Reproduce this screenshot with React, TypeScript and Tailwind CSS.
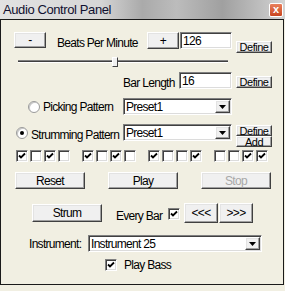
import React from 'react'

const raised =
  'flex items-center justify-center bg-[#f0f0f0] border border-t-white border-l-white border-r-[#404040] border-b-[#404040] shadow-[inset_-1px_-1px_0_#a0a0a0,inset_1px_1px_0_#e3e3e3]'
const sunken =
  'bg-white border border-t-[#808080] border-l-[#808080] border-r-white border-b-white shadow-[inset_1px_1px_0_#404040,inset_-1px_-1px_0_#dcdcdc]'

function Btn({ label, className = '', disabled = false }: { label: string; className?: string; disabled?: boolean }) {
  return (
    <div className={`${raised} ${className} ${disabled ? 'text-[#a8a8a8]' : 'text-black'}`}>
      <span className="leading-none">{label}</span>
    </div>
  )
}

// small "Define"/"Add" buttons use a tighter font
function SmallBtn({ label, className = '', underline = false }: { label: string; className?: string; underline?: boolean }) {
  return (
    <div className={`${raised} ${className} overflow-hidden`}>
      <span className={`text-[11px] leading-[10px] tracking-[-0.5px] ${underline ? 'underline' : ''}`}>{label}</span>
    </div>
  )
}

function Check({ on }: { on: boolean }) {
  return (
    <div className={`w-[12px] h-[12px] shrink-0 ${sunken} relative`}>
      {on && (
        <svg width="10" height="10" viewBox="0 0 10 10" className="absolute left-0 top-0">
          <polyline points="2,4.5 4,6.5 8,2.5" fill="none" stroke="#000" strokeWidth="1.8" />
        </svg>
      )}
    </div>
  )
}

function Radio({ on }: { on: boolean }) {
  return (
    <div className="w-[12px] h-[12px] shrink-0 rounded-full bg-white border border-[#9a9a9a] shadow-[inset_1px_1px_0_#c8c8c8] flex items-center justify-center">
      {on && <div className="w-[4px] h-[4px] rounded-full bg-black" />}
    </div>
  )
}

function Select({ value, className = '' }: { value: string; className?: string }) {
  return (
    <div className={`${sunken} ${className} flex items-center pl-[2px] pr-[1px]`}>
      <span className="flex-1 leading-none">{value}</span>
      <div className={`${raised} w-[15px] h-[13px]`}>
        <svg width="7" height="4" viewBox="0 0 7 4">
          <polygon points="0,0 7,0 3.5,4" fill="#000" />
        </svg>
      </div>
    </div>
  )
}

const pattern = [
  [true, false, true, false],
  [true, false, true, false],
  [true, false, false, true],
  [false, false, true, true],
]

export default function App() {
  return (
    <div className="w-[285px] h-[291px] bg-[#f1efe2] overflow-hidden text-[12px] tracking-[-0.7px] text-black font-['Liberation_Sans',Arial,sans-serif]">
      <div className="h-[19px] flex items-center pl-[3px] bg-[linear-gradient(to_right,#e2e2e2_0%,#d6d6d6_35%,#aaaaaa_50%,#bcbcbc_62%,#a0a0a0_78%,#c0c0c0_92%,#d4d4d4_100%)]">
        <span className="text-[13px] tracking-[-0.4px] text-[#101030]">Audio Control Panel</span>
        <div className="ml-auto mr-[2px] w-[14px] h-[14px] rounded-[2px] border border-white bg-[linear-gradient(#e9805c,#c9451f)] flex items-center justify-center">
          <span className="text-white text-[11px] font-bold leading-none tracking-normal">x</span>
        </div>
      </div>

      <div className="w-[284px] h-[266px] border border-[#1a1a1a] flex flex-col">
        <div className="flex items-start mt-[12px] h-[17px]">
          <Btn label="-" className="ml-[13px] w-[32px] h-[16px]" />
          <span className="ml-[11px] w-[90px] mt-[2px]">Beats Per Minute</span>
          <Btn label="+" className="w-[32px] h-[17px]" />
          <div className={`${sunken} ml-[1px] w-[52px] h-[17px] pl-[2px] flex items-center`}>126</div>
          <SmallBtn label="Define" underline className="ml-[4px] mt-[9px] w-[36px] h-[12px]" />
        </div>

        <div className="relative ml-[17px] mt-[8px] w-[210px] h-[10px]">
          <div className="absolute left-0 right-0 top-[3px] h-[1px] bg-[#808080]" />
          <div className="absolute left-0 right-0 top-[4px] h-[1px] bg-[#404040]" />
          <div className="absolute left-0 right-0 top-[5px] h-[1px] bg-white" />
          <div className="absolute left-[94px] top-0 w-[6px] h-[10px] bg-[#f0f0f0] border border-t-white border-l-white border-r-[#404040] border-b-[#404040]" />
        </div>

        <div className="flex items-start mt-[5px] h-[17px]">
          <span className="ml-[122px] w-[56px] mt-[2px]">Bar Length</span>
          <div className={`${sunken} w-[53px] h-[17px] pl-[2px] flex items-center`}>16</div>
          <SmallBtn label="Define" underline className="ml-[4px] mt-[4px] w-[36px] h-[12px]" />
        </div>

        <div className="flex items-center mt-[9px] h-[17px]">
          <div className="ml-[27px]">
            <Radio on={false} />
          </div>
          <span className="ml-[3px] w-[80px]">Picking Pattern</span>
          <Select value="Preset1" className="w-[109px] h-[17px]" />
        </div>

        <div className="flex items-start mt-[9px] h-[22px]">
          <div className="ml-[15px] mt-[3px]">
            <Radio on={true} />
          </div>
          <span className="ml-[3px] w-[92px] mt-[2px]">Strumming Pattern</span>
          <Select value="Preset1" className="w-[109px] h-[17px]" />
          <div className="ml-[4px] mt-[1px] flex flex-col">
            <SmallBtn label="Define" underline className="w-[36px] h-[11px]" />
            <SmallBtn label="Add" className="w-[36px] h-[11px]" />
          </div>
        </div>

        <div className="flex mt-[4px] ml-[15px] gap-[12px]">
          {pattern.map((g, gi) => (
            <div key={gi} className="flex gap-[2px]">
              {g.map((on, i) => (
                <Check key={i} on={on} />
              ))}
            </div>
          ))}
        </div>

        <div className="flex mt-[10px] ml-[14px] gap-[23px]">
          <Btn label="Reset" className="w-[70px] h-[17px]" />
          <Btn label="Play" className="w-[70px] h-[17px]" />
          <Btn label="Stop" className="w-[70px] h-[17px]" disabled />
        </div>

        <div className="flex items-start mt-[14px] h-[20px]">
          <Btn label="Strum" className="ml-[31px] mt-[1px] w-[70px] h-[18px]" />
          <span className="ml-[14px] w-[52px] mt-[4px]">Every Bar</span>
          <div className="mt-[5px]">
            <Check on={true} />
          </div>
          <Btn label="<<<" className="ml-[4px] w-[34px] h-[20px]" />
          <Btn label=">>>" className="ml-[1px] w-[34px] h-[20px]" />
        </div>

        <div className="flex items-center mt-[12px] h-[17px]">
          <span className="ml-[28px] w-[59px]">Instrument:</span>
          <Select value="Instrument 25" className="w-[174px] h-[17px]" />
        </div>

        <div className="flex items-center mt-[6px] h-[13px]">
          <div className="ml-[104px]">
            <Check on={true} />
          </div>
          <span className="ml-[7px]">Play Bass</span>
        </div>
      </div>
    </div>
  )
}
